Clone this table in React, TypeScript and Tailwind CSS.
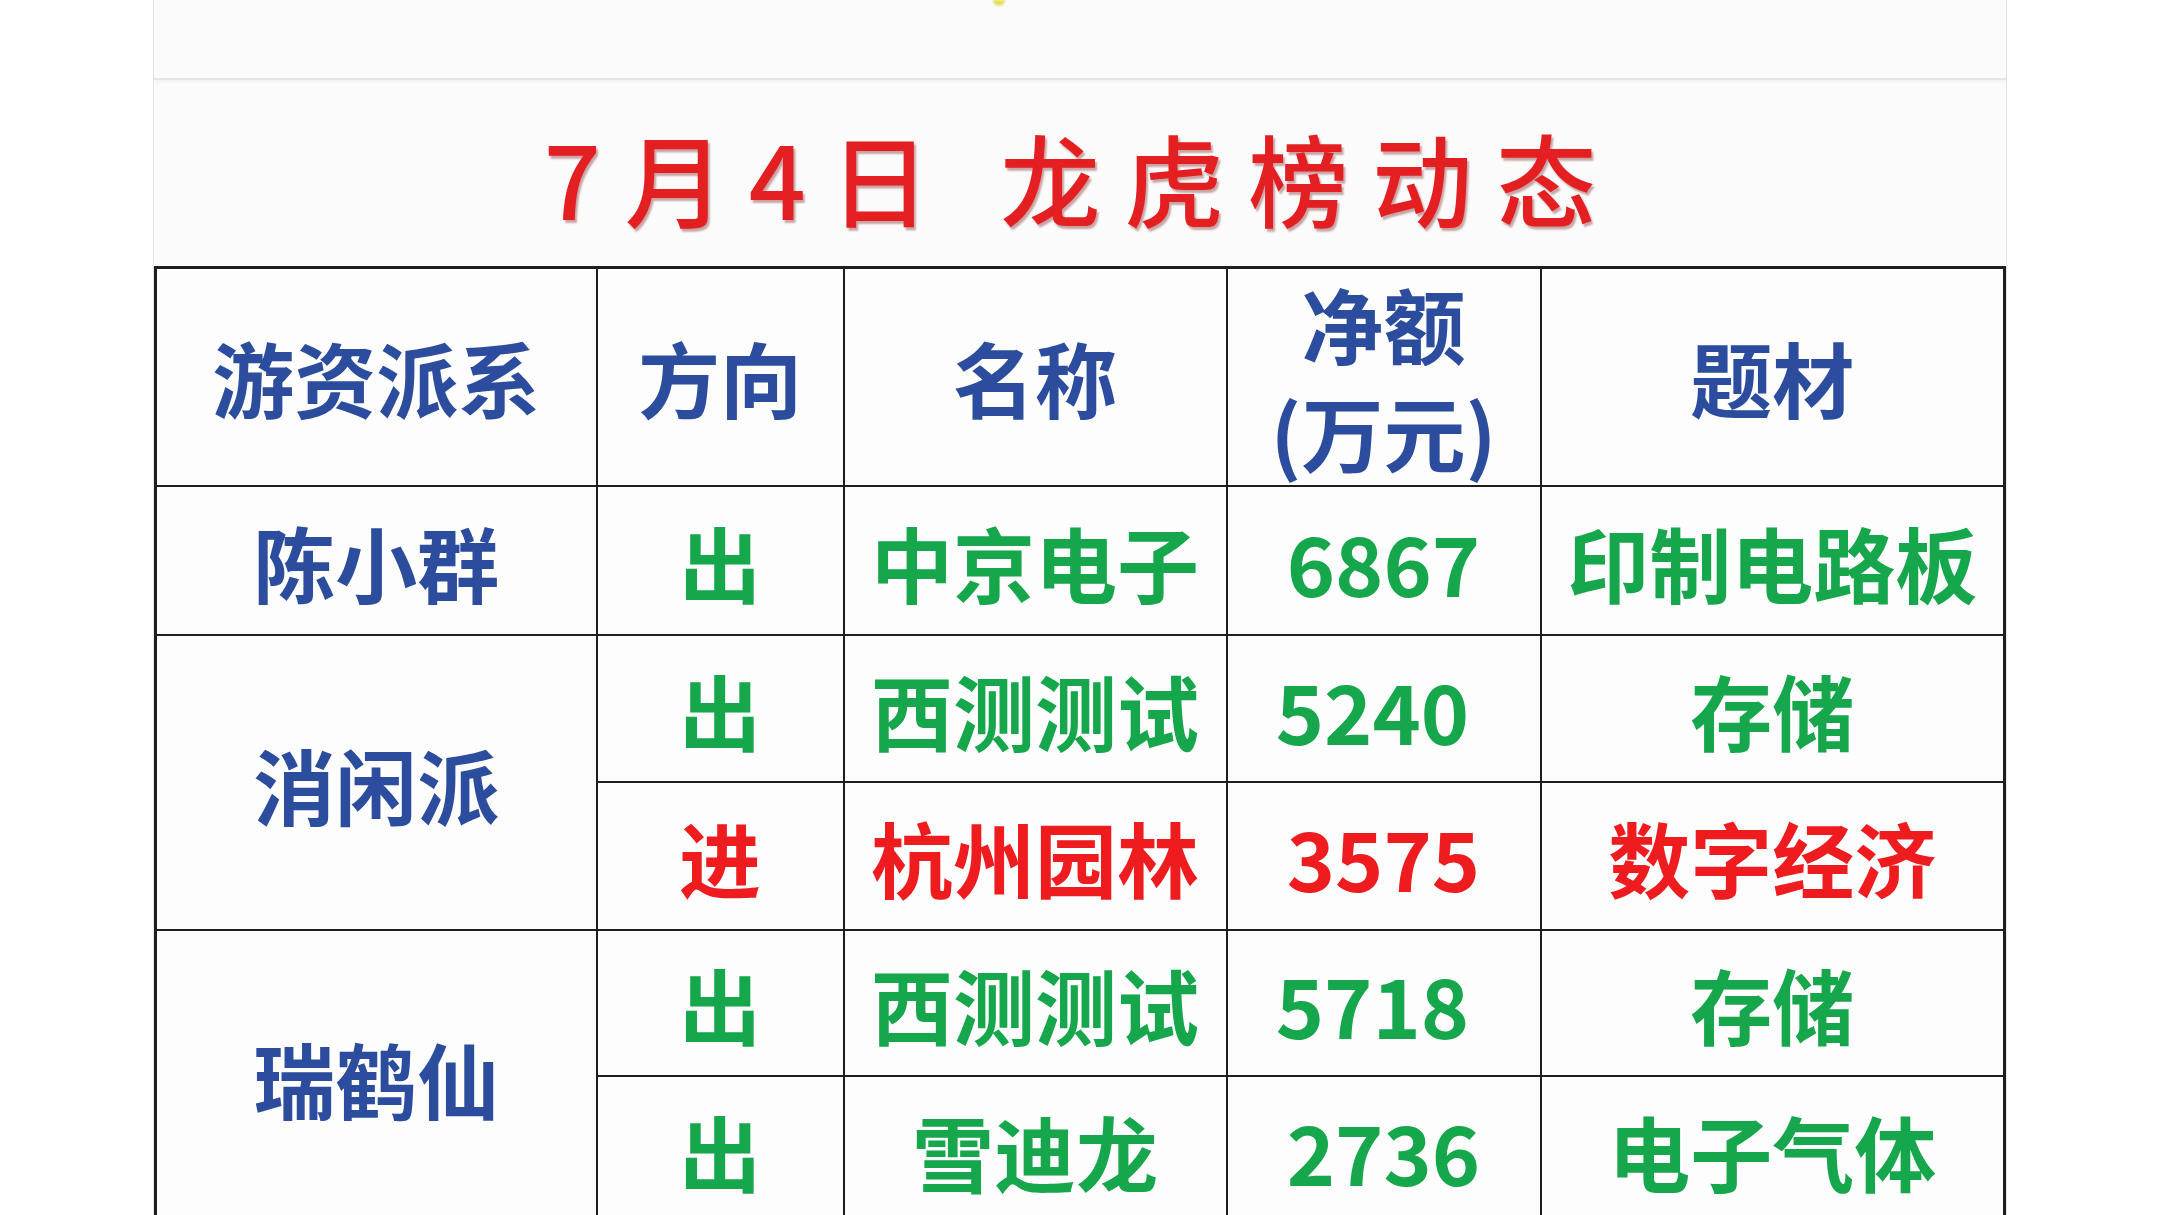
import React from 'react';

type Tone = 'green' | 'red';

interface Row {
  group?: string;
  span?: number;
  dir: string;
  name: string;
  amount: string;
  theme: string;
  tone: Tone;
  nudge?: boolean;
}

const ROWS: Row[] = [
  { group: '陈小群', span: 1, dir: '出', name: '中京电子', amount: '6867', theme: '印制电路板', tone: 'green' },
  { group: '消闲派', span: 2, dir: '出', name: '西测测试', amount: '5240', theme: '存储', tone: 'green', nudge: true },
  { dir: '进', name: '杭州园林', amount: '3575', theme: '数字经济', tone: 'red' },
  { group: '瑞鹤仙', span: 2, dir: '出', name: '西测测试', amount: '5718', theme: '存储', tone: 'green', nudge: true },
  { dir: '出', name: '雪迪龙', amount: '2736', theme: '电子气体', tone: 'green' },
];

const ROW_H = ['h-[149px]', 'h-[147px]', 'h-[148px]', 'h-[146px]', 'h-[147px]'];

const toneClass = (t: Tone) => (t === 'red' ? 'text-[#ee1b1f]' : 'text-[#16a64b]');

export default function App() {
  return (
    <div className="h-screen overflow-hidden bg-white font-['Noto_Sans_CJK_SC','Noto_Sans',sans-serif]">
      <div className="mx-auto w-[1852px] min-h-full bg-[#fbfbfb] shadow-[-1px_0_0_#e4e4e4,1px_0_0_#e4e4e4]">
        {/* ── top strip (cut off) ─────────────────────────── */}
        <div className="h-[80px] border-b-2 border-[#e6e6e6] shadow-[0_2px_3px_rgba(0,0,0,0.04)]">
          <div className="ml-[839px] w-[12px] h-[6px] rounded-b-full bg-[#e6df5a] blur-[1px]" />
        </div>

        {/* ── title ───────────────────────────────────────── */}
        <div className="h-[186px] flex items-center justify-center pt-[8px] pl-[4px]">
          <h1 className="text-[100px] leading-none font-medium tracking-[24px] text-[#e31f22] [text-shadow:2px_3px_2px_rgba(110,0,0,0.35)]">
            7月4日 龙虎榜动态
          </h1>
        </div>

        {/* ── table ───────────────────────────────────────── */}
        <table className="w-full table-fixed border-collapse bg-[#fdfdfd] text-[82px] font-bold leading-none">
          <colgroup>
            <col className="w-[441px]" />
            <col className="w-[247px]" />
            <col className="w-[383px]" />
            <col className="w-[314px]" />
            <col />
          </colgroup>
          <thead>
            <tr className="h-[217px] text-[#2c4d9e]">
              <th className="border-2 border-[#1e1e1e] border-l-[3px] border-t-[3px] font-bold">游资派系</th>
              <th className="border-2 border-[#1e1e1e] border-t-[3px] font-bold">方向</th>
              <th className="border-2 border-[#1e1e1e] border-t-[3px] font-bold">名称</th>
              <th className="border-2 border-[#1e1e1e] border-t-[3px] font-bold leading-[108px]">
                净额
                <br />
                (万元)
              </th>
              <th className="border-2 border-[#1e1e1e] border-r-[3px] border-t-[3px] font-bold">题材</th>
            </tr>
          </thead>
          <tbody>
            {ROWS.map((r, i) => (
              <tr key={i} className={ROW_H[i]}>
                {r.group && (
                  <td
                    rowSpan={r.span}
                    className="border-2 border-[#1e1e1e] border-l-[3px] text-center text-[#2c4d9e] pt-[2px]"
                  >
                    {r.group}
                  </td>
                )}
                <td className={`border-2 border-[#1e1e1e] text-center pt-[2px] ${toneClass(r.tone)}`}>{r.dir}</td>
                <td className={`border-2 border-[#1e1e1e] text-center pt-[2px] ${toneClass(r.tone)}`}>{r.name}</td>
                <td
                  className={`border-2 border-[#1e1e1e] text-center pt-[2px] ${r.nudge ? 'pr-[22px]' : ''} ${toneClass(r.tone)}`}
                >
                  {r.amount}
                </td>
                <td className={`border-2 border-[#1e1e1e] border-r-[3px] text-center pt-[2px] ${toneClass(r.tone)}`}>
                  {r.theme}
                </td>
              </tr>
            ))}
          </tbody>
        </table>
      </div>
    </div>
  );
}
